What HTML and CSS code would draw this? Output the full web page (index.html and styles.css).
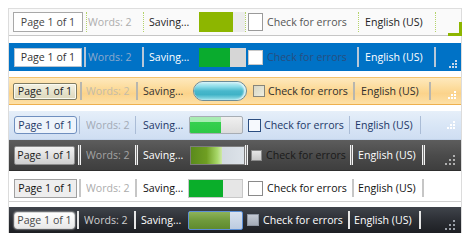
FILE: index.html
```html
<!DOCTYPE html>
<html>
<head>
<meta charset="utf-8">
<link rel="stylesheet" href="styles.css">
</head>
<body>
<div class="frame">
  <div class="bar t1">
    <span class="page">Page 1 of 1</span><span class="sep s1"></span>
    <span class="words">Words: 2</span><span class="sep s2"></span>
    <span class="saving">Saving...</span>
    <span class="prog"><span class="fill" style="width:74%"></span></span><span class="sep s3"></span>
    <span class="chk"></span><span class="label">Check for errors</span><span class="sep s4"></span>
    <span class="lang">English (US)</span><span class="sep s5"></span>
    <span class="corner"></span>
  </div>
  <div class="bar t2">
    <span class="page">Page 1 of 1</span><span class="sep s1"></span>
    <span class="words">Words: 2</span><span class="sep s2"></span>
    <span class="saving">Saving...</span>
    <span class="prog"><span class="fill" style="width:67%"></span></span>
    <span class="chk"></span><span class="label">Check for errors</span><span class="sep s4"></span>
    <span class="lang">English (US)</span><span class="sep s5"></span>
    <svg class="grip" width="8" height="8" viewBox="0 0 8 8"><rect x="6" y="0" width="2" height="2"/><rect x="3" y="3" width="2" height="2"/><rect x="6" y="3" width="2" height="2"/><rect x="0" y="6" width="2" height="2"/><rect x="3" y="6" width="2" height="2"/><rect x="6" y="6" width="2" height="2"/></svg>
  </div>
  <div class="bar t3">
    <span class="page">Page 1 of 1</span><span class="sep s1"></span>
    <span class="words">Words: 2</span><span class="sep s2"></span>
    <span class="saving">Saving...</span>
    <span class="prog"><span class="fill" style="width:100%"></span></span>
    <span class="chk"></span><span class="label">Check for errors</span><span class="sep s4"></span>
    <span class="lang">English (US)</span><span class="sep s5"></span>
    <svg class="grip" width="8" height="8" viewBox="0 0 8 8"><rect x="6" y="0" width="2" height="2"/><rect x="3" y="3" width="2" height="2"/><rect x="6" y="3" width="2" height="2"/><rect x="0" y="6" width="2" height="2"/><rect x="3" y="6" width="2" height="2"/><rect x="6" y="6" width="2" height="2"/></svg>
  </div>
  <div class="bar t4">
    <span class="page">Page 1 of 1</span><span class="sep s1"></span>
    <span class="words">Words: 2</span><span class="sep s2"></span>
    <span class="saving">Saving...</span>
    <span class="prog"><span class="fill" style="width:60%"></span></span>
    <span class="chk"></span><span class="label">Check for errors</span><span class="sep s4"></span>
    <span class="lang">English (US)</span><span class="sep s5"></span>
    <svg class="grip" width="11" height="10" viewBox="0 0 11 10"><rect x="9" y="0" width="2" height="2"/><rect x="6" y="3" width="2" height="2"/><rect x="9" y="3" width="2" height="2"/><rect x="3" y="6" width="2" height="2"/><rect x="6" y="6" width="2" height="2"/><rect x="9" y="6" width="2" height="2"/></svg>
  </div>
  <div class="bar t5">
    <span class="page">Page 1 of 1</span><span class="sep s1"></span>
    <span class="words">Words: 2</span><span class="sep s2"></span>
    <span class="saving">Saving...</span>
    <span class="prog"><span class="fill" style="width:58%"></span></span><span class="sep s3"></span>
    <span class="chk"></span><span class="label">Check for errors</span><span class="sep s4"></span>
    <span class="lang">English (US)</span><span class="sep s5"></span>
    <svg class="grip" width="10" height="10" viewBox="0 0 10 10"><rect x="8" y="0" width="2" height="2"/><rect x="4" y="4" width="2" height="2"/><rect x="8" y="4" width="2" height="2"/><rect x="0" y="8" width="2" height="2"/><rect x="4" y="8" width="2" height="2"/><rect x="8" y="8" width="2" height="2"/></svg>
  </div>
  <div class="bar t6">
    <span class="page">Page 1 of 1</span><span class="sep s1"></span>
    <span class="words">Words: 2</span><span class="sep s2"></span>
    <span class="saving">Saving...</span>
    <span class="prog"><span class="fill" style="width:64%"></span></span>
    <span class="chk"></span><span class="label">Check for errors</span><span class="sep s4"></span>
    <span class="lang">English (US)</span><span class="sep s5"></span>
  </div>
  <div class="bar t7">
    <span class="page">Page 1 of 1</span><span class="sep s1"></span>
    <span class="words">Words: 2</span><span class="sep s2"></span>
    <span class="saving">Saving...</span>
    <span class="prog"><span class="fill" style="width:78%"></span></span>
    <span class="chk"></span><span class="label">Check for errors</span><span class="sep s4"></span>
    <span class="lang">English (US)</span><span class="sep s5"></span>
    <svg class="grip" width="10" height="10" viewBox="0 0 10 10"><rect x="8" y="0" width="2" height="2"/><rect x="4" y="4" width="2" height="2"/><rect x="8" y="4" width="2" height="2"/><rect x="0" y="8" width="2" height="2"/><rect x="4" y="8" width="2" height="2"/><rect x="8" y="8" width="2" height="2"/></svg>
  </div>
</div>
</body>
</html>
```
FILE: styles.css
```css
html, body { margin: 0; padding: 0; background: #fff; }
body { padding: 8px; }
.frame {
  width: 454px;
  box-sizing: border-box;
  border-left: 1px solid #dcdcdc;
  border-right: 1px solid #dcdcdc;
  display: flex;
  flex-direction: column;
}
.bar {
  position: relative;
  display: flex;
  align-items: center;
  box-sizing: border-box;
  font-family: "Open Sans", "Noto Sans", sans-serif;
  font-size: 10.6px;
  white-space: nowrap;
}
.bar > * { flex: none; box-sizing: border-box; }
.page { display: flex; align-items: center; justify-content: center; }
.words, .saving, .label, .lang { display: block; overflow: hidden; }
.prog { display: flex; overflow: hidden; }
.fill { display: block; height: 100%; }
.sep { align-self: stretch; }
.grip { position: absolute; right: 4px; bottom: 3px; }

/* ---------- theme 1: light, green accent ---------- */
.t1 { height: 28px; background: #fafafa; border-top: 1px solid #dedede; border-bottom: 1px solid #c6c6c6; }
.t1 .page { margin-left: 4px; width: 70px; height: 20px; border: 1px solid #a8a8a8; background: #fff; color: #444; }
.t1 .sep { width: 1px; margin-top: 3px; margin-bottom: 3px; border-left: 1px dotted #b4d36a; }
.t1 .s1 { margin-left: 3px; }
.t1 .words { margin-left: 1px; width: 55px; color: #adadad; }
.t1 .saving { margin-left: 5px; width: 50px; color: #1e1e1e; }
.t1 .prog { width: 46px; height: 20px; background: #ececec; }
.t1 .fill { background: #8db600; }
.t1 .chk { margin-left: 2px; width: 15px; height: 18px; border: 1px solid #9a9a9a; background: #fff; }
.t1 .label { margin-left: 4px; width: 91px; color: #555; }
.t1 .lang { margin-left: 6px; width: 70px; color: #222; }
.t1 .corner { position: absolute; right: -1px; bottom: -1px; width: 14px; height: 14px; border-right: 3px solid #8db600; border-bottom: 3px solid #8db600; }

/* ---------- theme 2: blue ---------- */
.t2 { margin-top: 7px; height: 28px; background: #0072c6; }
.t2 .page { margin-left: 5px; width: 68px; height: 19px; border: 1px solid #b8c4d0; background: #fff; color: #333; }
.t2 .sep { width: 2px; margin-top: 4px; margin-bottom: 4px; background: #b9c8d8; }
.t2 .s1 { margin-left: 2px; }
.t2 .words { margin-left: 2px; width: 54px; color: #8ea9cc; }
.t2 .saving { margin-left: 5px; width: 50px; color: #fff; }
.t2 .prog { width: 47px; height: 19px; background: #d6d6d6; }
.t2 .fill { background: #0aab2e; }
.t2 .chk { margin-left: 2px; width: 15px; height: 15px; border: 1px solid #c8c8c8; background: #fff; }
.t2 .label { margin-left: 4px; width: 90px; color: #274e80; }
.t2 .lang { margin-left: 6px; width: 69px; color: #fff; }
.t2 .grip { fill: #c8d8ea; }

/* ---------- theme 3: orange ---------- */
.t3 { margin-top: 6px; height: 28px; background: linear-gradient(#fee9bd, #fcd996 45%, #fbd38b 60%, #fde0a6); border-top: 1px solid #f4c46e; border-bottom: 1px solid #eeb04e; }
.t3 .page { margin-left: 4px; width: 64px; height: 17px; border: 1px solid #7e7b62; border-radius: 2px; background: linear-gradient(#f3f1e2, #dcd7bb); color: #222; box-shadow: inset 0 0 0 1px #fbfaf0; }
.t3 .sep { width: 2px; margin-top: 4px; margin-bottom: 4px; background: #b8b6ae; }
.t3 .s1 { margin-left: 3px; }
.t3 .words { margin-left: 4px; width: 50px; color: #c4bca8; }
.t3 .saving { margin-left: 5px; width: 50px; color: #333; }
.t3 .prog { width: 54px; height: 20px; border: 1px solid #6c8c98; border-radius: 10px; background: #e0e0e0; }
.t3 .fill { background: linear-gradient(#d0f2f8, #8cdce8 25%, #48b8cc 50%, #3fb2c6 70%, #9ae0ea); border-radius: 9px; box-shadow: inset -2px 0 2px #e8f8fa; }
.t3 .chk { margin-left: 6px; width: 12px; height: 12px; border: 1px solid #87857a; background: linear-gradient(135deg, #d8d6c4, #eeeddf); }
.t3 .label { margin-left: 3px; width: 85px; color: #2e2e2e; }
.t3 .lang { margin-left: 6px; width: 68px; color: #2e2e2e; }
.t3 .grip { fill: #ffffff; right: 5px; bottom: 5px; }

/* ---------- theme 4: light blue ---------- */
.t4 { margin-top: 6px; height: 29px; background: linear-gradient(#e6eff9, #d9e6f6 50%, #cfdef2); border-bottom: 1px solid #c2d3ea; }
.t4 .page { margin-left: 5px; width: 63px; height: 18px; border: 1px solid #6f8fbf; border-radius: 3px; background: #eef4fb; color: #1d3767; }
.t4 .sep { width: 1px; margin-top: 5px; margin-bottom: 5px; background: #aabcd6; }
.t4 .s1 { margin-left: 2px; }
.t4 .words { margin-left: 6px; width: 49px; color: #a3aab5; }
.t4 .saving { margin-left: 7px; width: 46px; color: #1d3767; }
.t4 .prog { width: 54px; height: 18px; border: 1px solid #a7adb4; border-radius: 2px; background: linear-gradient(#f0f0f0, #dcdcdc); }
.t4 .fill { background: linear-gradient(#a8ecb2 0, #a8ecb2 30%, #36d04e 31%, #2ec846); }
.t4 .chk { margin-left: 5px; width: 13px; height: 13px; border: 1px solid #2b4d80; background: #f6f9fd; }
.t4 .label { margin-left: 3px; width: 85px; color: #1d3767; }
.t4 .lang { margin-left: 5px; width: 65px; color: #1d3767; }
.t4 .grip { fill: #ffffff; right: 6px; bottom: 8px; }

/* ---------- theme 5: graphite ---------- */
.t5 { height: 31px; background: linear-gradient(#5d5d5d, #4b4b4b 50%, #3e3e3e); border-bottom: 1px solid #2e2e2e; }
.t5 .page { margin-left: 5px; width: 61px; height: 19px; border: 1px solid #8c8c8c; border-radius: 2px; background: linear-gradient(#f2f2f2, #cfcfcf); color: #1c1c1c; }
.t5 .sep { width: 3px; margin-top: 5px; margin-bottom: 5px; border-left: 1px solid #f4f4f4; border-right: 1px solid #f4f4f4; background: #7a7a7a; }
.t5 .s1 { margin-left: 3px; }
.t5 .words { margin-left: 5px; width: 49px; color: #a4a4a4; }
.t5 .saving { margin-left: 5px; width: 47px; color: #fff; }
.t5 .prog { width: 55px; height: 19px; border: 1px solid #7d7d7d; background: linear-gradient(90deg, #c3cbd4, #dde3e9); }
.t5 .fill { background: linear-gradient(90deg, #5a8a1c, #6f9e22 50%, #a8d86a 85%, #cfe8a8); }
.t5 .chk { margin-left: 3px; width: 11px; height: 11px; border: 1px solid #8a8a8a; background: linear-gradient(#e6e6e6, #c8c8c8); }
.t5 .label { margin-left: 4px; width: 84px; color: #1a1a1a; }
.t5 .lang { margin-left: 5px; width: 64px; color: #fff; }
.t5 .grip { fill: #b0b0b0; right: 6px; bottom: 5px; }

/* ---------- theme 6: white ---------- */
.t6 { margin-top: 4px; height: 27px; background: #fff; border-bottom: 1px solid #d0d0d0; }
.t6 .page { margin-left: 5px; width: 63px; height: 19px; border: 1px solid #a0a0a0; background: #eeeeee; color: #111; }
.t6 .sep { width: 2px; margin-top: 4px; margin-bottom: 4px; background: #c6c6c6; }
.t6 .s1 { margin-left: 2px; }
.t6 .words { margin-left: 5px; width: 49px; color: #acacac; }
.t6 .saving { margin-left: 6px; width: 45px; color: #111; }
.t6 .prog { width: 55px; height: 19px; border: 1px solid #c8c8c8; background: #e6e6e6; }
.t6 .fill { background: #0aae2a; }
.t6 .chk { margin-left: 5px; width: 15px; height: 15px; border: 1px solid #8a8a8a; background: #fff; }
.t6 .label { margin-left: 4px; width: 85px; color: #111; }
.t6 .lang { margin-left: 4px; width: 64px; color: #111; }

/* ---------- theme 7: black ---------- */
.t7 { margin-top: 5px; height: 26px; background: linear-gradient(#40444b, #2c2f35 50%, #1d1f23); }
.t7 .page { margin-left: 5px; width: 61px; height: 17px; border: 1px solid #d8d8d8; border-radius: 3px; background: linear-gradient(#ffffff, #e8e8e8); color: #4a4a4a; box-shadow: 0 0 2px #fff; }
.t7 .sep { width: 2px; margin-top: 4px; margin-bottom: 4px; background: #e6e6e6; }
.t7 .s1 { margin-left: 2px; }
.t7 .words { margin-left: 5px; width: 50px; color: #cfcfcf; }
.t7 .saving { margin-left: 5px; width: 47px; color: #fff; }
.t7 .prog { width: 55px; height: 19px; border: 1px solid #5b8fd6; border-radius: 2px; background: linear-gradient(#d9e2ee, #bccbe0); }
.t7 .fill { background: linear-gradient(#8db35a, #6f9a3c 50%, #5f8a2e); }
.t7 .chk { margin-left: 4px; width: 12px; height: 12px; border: 1px solid #8e96a2; background: linear-gradient(#c4cad4, #a4acb8); }
.t7 .label { margin-left: 4px; width: 85px; color: #fff; }
.t7 .lang { margin-left: 4px; width: 65px; color: #fff; }
.t7 .grip { fill: #9aa0a8; right: 6px; bottom: 3px; }
```
